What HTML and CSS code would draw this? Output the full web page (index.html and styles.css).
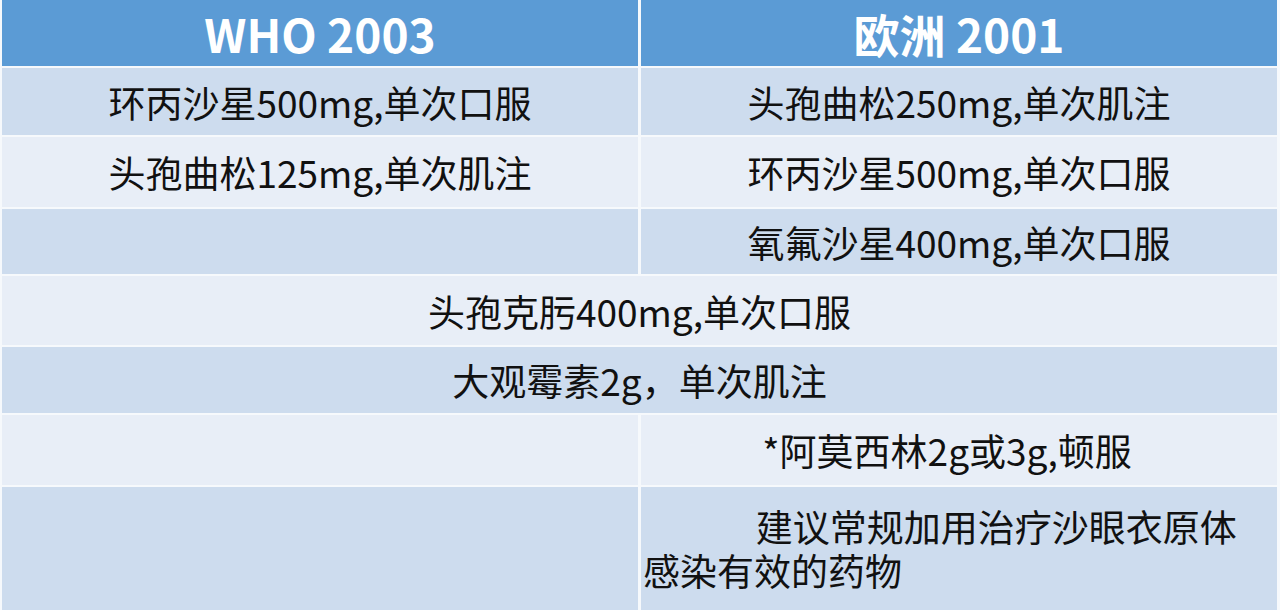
FILE: index.html
```html
<!DOCTYPE html>
<html lang="zh-CN">
<head>
<meta charset="utf-8">
<title>淋病治疗方案对比</title>
<link rel="stylesheet" href="styles.css">
</head>
<body>
<div class="grid">
  <div class="cell head">WHO 2003</div>
  <div class="cell head">欧洲 2001</div>

  <div class="cell dark r1">环丙沙星500mg,单次口服</div>
  <div class="cell dark r1">头孢曲松250mg,单次肌注</div>

  <div class="cell light r2">头孢曲松125mg,单次肌注</div>
  <div class="cell light r2">环丙沙星500mg,单次口服</div>

  <div class="cell dark r3"></div>
  <div class="cell dark r3">氧氟沙星400mg,单次口服</div>

  <div class="cell light span r4">头孢克肟400mg,单次口服</div>

  <div class="cell dark span r5">大观霉素2g，单次肌注</div>

  <div class="cell light r6"></div>
  <div class="cell light r6 amox">*阿莫西林2g或3g,顿服</div>

  <div class="cell dark r7"></div>
  <div class="cell dark r7 note"><p class="note-text">建议常规加用治疗沙眼衣原体<br>感染有效的药物</p></div>
</div>
</body>
</html>
```

FILE: styles.css
```css
html, body {
  margin: 0;
  padding: 0;
  background: #f6f9fc;
}

body {
  width: 1280px;
  height: 610px;
  overflow: hidden;
  font-family: "Noto Sans CJK SC", "Noto Sans", sans-serif;
  color: #111;
}

.grid {
  display: grid;
  grid-template-columns: 636px 636px;
  grid-template-rows: 66px 67px 70px 65px 69px 66px 70px 130px;
  column-gap: 3px;
  row-gap: 2px;
  padding: 0 3px 0 2px;
}

.cell {
  display: flex;
  align-items: center;
  justify-content: center;
  font-size: 37px;
  line-height: 44px;
  letter-spacing: 0;
}

.head {
  background: #5b9bd5;
  color: #ffffff;
  font-weight: 700;
  font-size: 46px;
  line-height: 50px;
}

.dark {
  background: #cddcee;
}

.light {
  background: #e8eef7;
}

.span {
  grid-column: 1 / -1;
}

.amox {
  padding-right: 24px;
}

.note {
  justify-content: flex-start;
  align-items: flex-start;
  padding: 17px 0 0 2px;
}

.note-text {
  margin: 0;
  text-indent: 3.05em;
  font-size: 37px;
  line-height: 44px;
}
```
